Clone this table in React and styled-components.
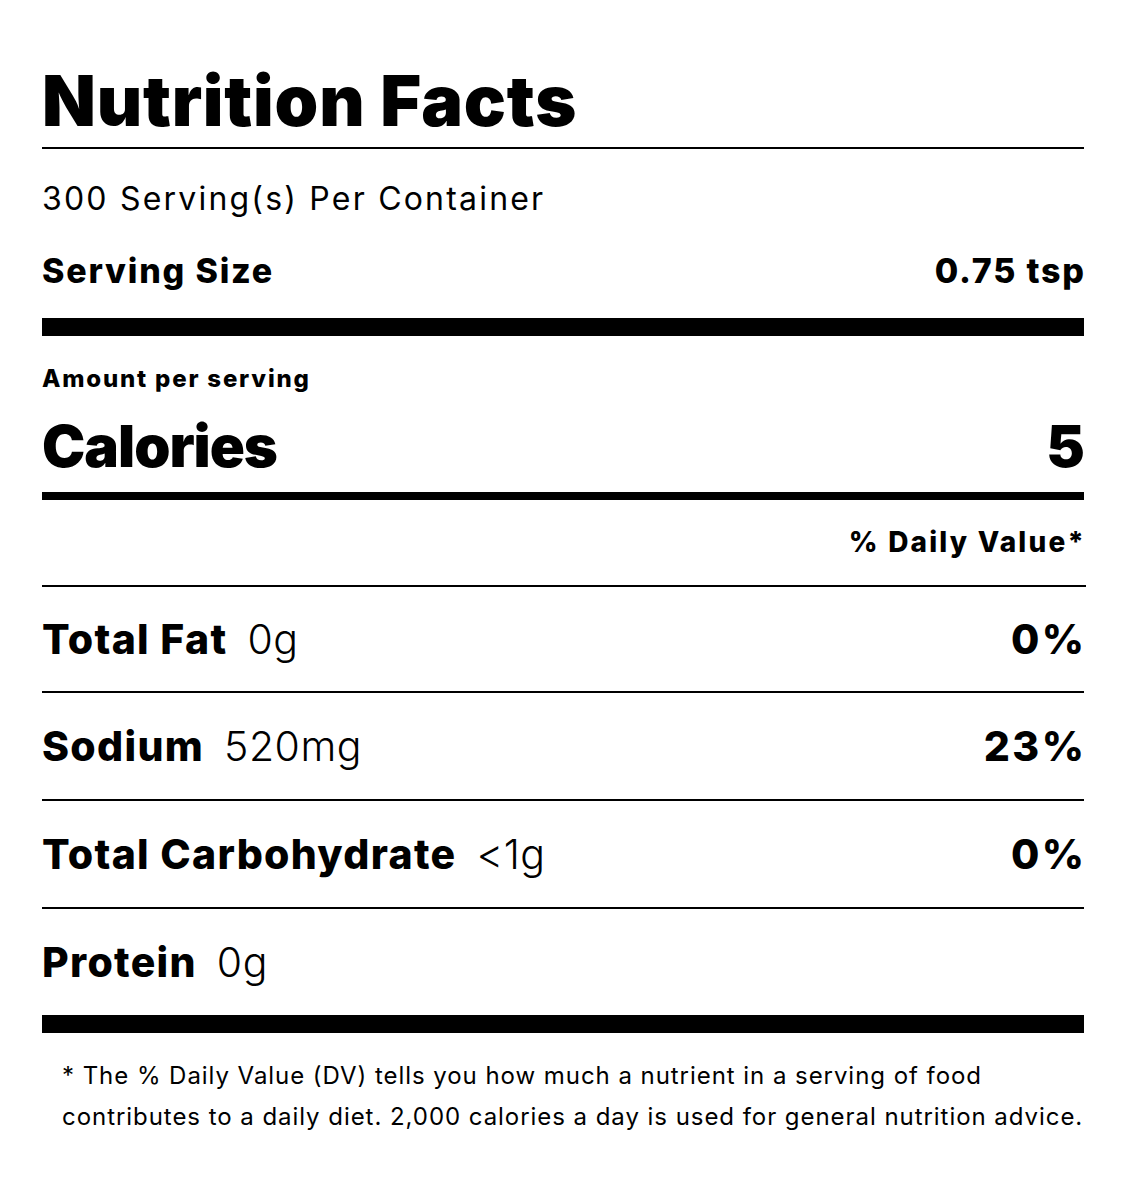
import React from 'react';
import styled, { createGlobalStyle } from 'styled-components';

const GlobalStyle = createGlobalStyle`
  body {
    margin: 0;
    background: #fff;
    color: #000;
    font-family: Inter, "Liberation Sans", sans-serif;
  }
`;

const Label = styled.section`
  width: 1042px;
  padding: 66px 42px 60px 42px;
`;

const Title = styled.h1`
  margin: 0;
  font-size: 70px;
  font-weight: 900;
  letter-spacing: 0.8px;
  line-height: 70px;
  padding-bottom: 11px;
  border-bottom: 2px solid #000;
`;

const Servings = styled.div`
  font-size: 32px;
  font-weight: 400;
  letter-spacing: 2.2px;
  line-height: 40px;
  margin-top: 30px;
`;

const SizeRow = styled.div`
  display: flex;
  justify-content: space-between;
  align-items: baseline;
  font-size: 34px;
  font-weight: 800;
  letter-spacing: 1.8px;
  line-height: 40px;
  margin-top: 32px;
  margin-right: -1.8px;
`;

const Bar = styled.div`
  height: ${p => p.thick}px;
  background: #000;
  margin-top: ${p => p.top || 0}px;
`;

const AmountLabel = styled.div`
  font-size: 24px;
  font-weight: 800;
  letter-spacing: 1.8px;
  line-height: 30px;
  margin-top: 28px;
`;

const CaloriesRow = styled.div`
  display: flex;
  justify-content: space-between;
  align-items: baseline;
  font-size: 58px;
  font-weight: 900;
  letter-spacing: -1px;
  line-height: 60px;
  margin-top: 22px;
`;

const DailyHeader = styled.div`
  text-align: right;
  font-size: 28px;
  font-weight: 800;
  letter-spacing: 2.2px;
  line-height: 85px;
  padding-right: 0;
  margin-right: -2px;
  border-bottom: 2px solid #000;
`;

const Row = styled.div`
  display: flex;
  justify-content: space-between;
  align-items: center;
  height: ${p => (p.first ? 104 : 106)}px;
  border-bottom: ${p => (p.last ? 'none' : '2px solid #000')};
  font-size: 41px;
  line-height: 48px;
`;

const Name = styled.span`
  font-weight: 800;
  letter-spacing: 1.3px;
`;

const Amount = styled.span`
  font-weight: 300;
  letter-spacing: 0.5px;
  margin-left: 20px;
`;

const Percent = styled.span`
  font-weight: 800;
  letter-spacing: 2.5px;
  margin-right: -2.5px;
`;

const Footnote = styled.p`
  margin: 22px 0 0 20px;
  font-size: 24px;
  font-weight: 400;
  letter-spacing: 0.95px;
  line-height: 41px;
  white-space: nowrap;
`;

const nutrients = [
  { name: 'Total Fat', amount: '0g', dv: '0%' },
  { name: 'Sodium', amount: '520mg', dv: '23%' },
  { name: 'Total Carbohydrate', amount: '<1g', dv: '0%' },
  { name: 'Protein', amount: '0g' }
];

export default function App() {
  return (
    <>
      <GlobalStyle />
      <Label>
        <Title>Nutrition Facts</Title>
        <Servings>300 Serving(s) Per Container</Servings>
        <SizeRow>
          <span>Serving Size</span>
          <span>0.75 tsp</span>
        </SizeRow>
        <Bar thick={18} top={27} />
        <AmountLabel>Amount per serving</AmountLabel>
        <CaloriesRow>
          <span>Calories</span>
          <span>5</span>
        </CaloriesRow>
        <Bar thick={8} top={16} />
        <DailyHeader>% Daily Value*</DailyHeader>
        {nutrients.map((n, i) => (
          <Row key={n.name} first={i === 0} last={i === nutrients.length - 1}>
            <div>
              <Name>{n.name}</Name>
              <Amount>{n.amount}</Amount>
            </div>
            {n.dv && <Percent>{n.dv}</Percent>}
          </Row>
        ))}
        <Bar thick={18} />
        <Footnote>
          * The % Daily Value (DV) tells you how much a nutrient in a serving of food
          <br />
          contributes to a daily diet. 2,000 calories a day is used for general nutrition advice.
        </Footnote>
      </Label>
    </>
  );
}
